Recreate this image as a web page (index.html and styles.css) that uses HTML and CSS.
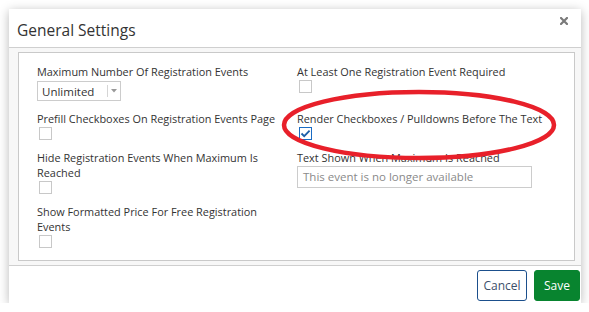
FILE: index.html
```html
<!DOCTYPE html>
<html>
<head>
<meta charset="utf-8">
<link rel="stylesheet" href="styles.css">
</head>
<body>
<div class="dialog">
  <div class="header">
    <h1 class="title">General Settings</h1>
    <button class="close" aria-label="Close">
      <svg width="8" height="8" viewBox="0 0 8 8"><path d="M1 1L7 7M7 1L1 7" stroke="#7a7a7a" stroke-width="2.2" stroke-linecap="square"/></svg>
    </button>
  </div>
  <div class="body">
    <div class="panel">
      <div class="field">
        <div class="label">Maximum Number Of Registration Events</div>
        <div class="select"><span class="select-value">Unlimited</span><span class="select-arrow"><svg width="6" height="4" viewBox="0 0 6 4"><path d="M0 0H6L3 3.5Z" fill="#999"/></svg></span></div>
      </div>
      <div class="field">
        <div class="label">At Least One Registration Event Required</div>
        <div class="check"></div>
      </div>
      <div class="field">
        <div class="label">Prefill Checkboxes On Registration Events Page</div>
        <div class="check"></div>
      </div>
      <div class="field">
        <div class="label">Render Checkboxes / Pulldowns Before The Text</div>
        <div class="check checked"><svg width="11" height="11" viewBox="0 0 11 11"><path d="M1.5 5.5L4.2 8.2L9.6 2.6" fill="none" stroke="#1b5ea8" stroke-width="1.8"/></svg></div>
      </div>
      <div class="field">
        <div class="label wrap">Hide Registration Events When Maximum Is Reached</div>
        <div class="check"></div>
      </div>
      <div class="field">
        <div class="label">Text Shown When Maximum Is Reached</div>
        <div class="input">This event is no longer available</div>
      </div>
      <div class="field">
        <div class="label wrap">Show Formatted Price For Free Registration Events</div>
        <div class="check"></div>
      </div>
    </div>
  </div>
  <div class="footer">
    <button class="btn btn-cancel">Cancel</button>
    <button class="btn btn-save">Save</button>
  </div>
  <svg class="annotation" width="290" height="80" viewBox="0 0 290 80"><ellipse cx="145" cy="40" rx="135" ry="33" fill="none" stroke="#e8202a" stroke-width="4.5"/></svg>
</div>
</body>
</html>
```
FILE: styles.css
```css
* { box-sizing: border-box; }
html, body { margin: 0; padding: 0; background: #fff; }
body { font-family: "Open Sans", "Noto Sans", sans-serif; color: #333; }

.dialog {
  position: relative;
  margin: 9px 0 0 9px;
  width: 572px;
  height: 294px;
  background: #fff;
  box-shadow: 0 2px 10px rgba(0,0,0,0.28);
  display: flex;
  flex-direction: column;
}

.header {
  height: 39px;
  border-bottom: 1px solid #cfcfcf;
  display: flex;
  align-items: center;
  justify-content: space-between;
  padding: 4px 8px 0 8px;
}
.title {
  margin: 0;
  font-size: 15.5px;
  font-weight: 400;
  color: #333;
  line-height: 22px;
}
.close {
  border: 0;
  background: none;
  padding: 0;
  align-self: flex-start;
  margin: 4px 5px 0 0;
  width: 8px;
  height: 8px;
  display: flex;
}

.body {
  background: #f7f7f7;
  padding: 4px 6px 4px 9px;
  border-bottom: 1px solid #cfcfcf;
}
.panel {
  background: #fff;
  border: 1px solid #c9c9c9;
  height: 209px;
  padding: 11px 10px 0 18px;
  display: grid;
  grid-template-columns: 260px 1fr;
  row-gap: 10px;
  align-content: start;
  font-size: 10.9px;
}
.field { display: flex; flex-direction: column; align-items: flex-start; }
.label { line-height: 15px; white-space: nowrap; }
.label.wrap { white-space: normal; width: 232px; }

.check {
  width: 13px;
  height: 13px;
  border: 1px solid #c8c8c8;
  background: #fff;
  margin: 1px 0 0 2px;
  display: flex;
  align-items: center;
  justify-content: center;
}
.check.checked { border-color: #1a6cc4; }

.select {
  margin-top: 2px;
  width: 84px;
  height: 20px;
  border: 1px solid #cccccc;
  display: flex;
  align-items: center;
  font-size: 11.5px;
  color: #333;
}
.select-value { flex: 1; padding-left: 4px; }
.select-arrow {
  width: 12px;
  height: 12px;
  border-left: 1px solid #d5d5d5;
  display: flex;
  align-items: center;
  justify-content: center;
  margin-right: 1px;
}

.input {
  margin-top: 1px;
  width: 235px;
  height: 22px;
  border: 1px solid #cccccc;
  color: #8a8a8a;
  font-size: 11.5px;
  line-height: 20px;
  padding-left: 5px;
}

.footer {
  flex: 1;
  display: flex;
  justify-content: flex-end;
  align-items: flex-start;
  gap: 7px;
  padding: 4px 1px 0 0;
}
.btn {
  height: 31px;
  border-radius: 3px;
  font-family: "Open Sans", "Noto Sans", sans-serif;
  font-size: 12px;
  padding: 0;
  cursor: pointer;
}
.btn-cancel {
  width: 50px;
  background: #fff;
  border: 1px solid #1b4f8c;
  color: #3c4f6a;
}
.btn-save {
  width: 46px;
  background: #08842f;
  border: 1px solid #08842f;
  color: #fff;
}

.annotation {
  position: absolute;
  left: 265px;
  top: 76px;
  pointer-events: none;
}
```
